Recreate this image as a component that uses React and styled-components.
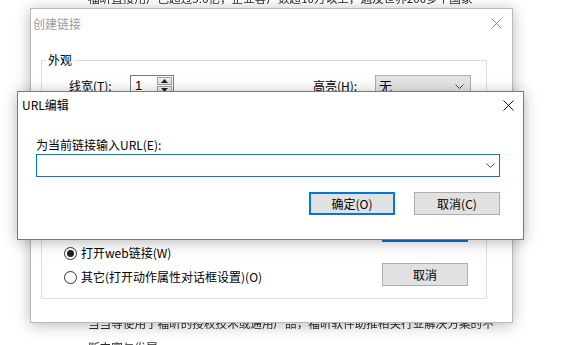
import React from "react";
import styled, { createGlobalStyle } from "styled-components";

const Global = createGlobalStyle`
  html, body { margin: 0; padding: 0; background: #fff; }
  body { font-family: "Noto Sans CJK SC", "Noto Sans", sans-serif; font-size: 12px; color: #000; }
  * { box-sizing: border-box; }
`;

const Desktop = styled.div`
  position: relative;
  width: 572px;
  height: 345px;
  overflow: hidden;
  background: #fff;
`;

const Page = styled.div`
  display: flex;
  flex-direction: column;
  justify-content: space-between;
  height: 345px;
  padding-left: 88px;
  color: #2a2a2a;
  font-size: 11.6px;
  line-height: 24px;
  filter: blur(0.35px);
  white-space: nowrap;
`;

const Para = styled.p`
  margin: ${(p) => (p.$top ? "-14px 0 0" : "0 0 -14px")};
`;

const Window = styled.div`
  position: absolute;
  left: ${(p) => p.$x}px;
  top: ${(p) => p.$y}px;
  width: ${(p) => p.$w}px;
  height: ${(p) => p.$h}px;
  background: #fff;
  border: 1px solid ${(p) => p.$border};
  box-shadow: 0 2px 14px rgba(0, 0, 0, 0.28);
  display: flex;
  flex-direction: column;
`;

const TitleBar = styled.div`
  height: ${(p) => p.$h}px;
  display: flex;
  align-items: center;
  justify-content: space-between;
  padding: 0 ${(p) => p.$pr}px 0 ${(p) => p.$pl}px;
  color: ${(p) => p.$color};
  font-size: 12px;
  line-height: 16px;
  flex: none;
`;

const CloseIcon = ({ color }) => (
  <svg width="11" height="11" viewBox="0 0 11 11">
    <path d="M0.5 0.5 L10.5 10.5 M10.5 0.5 L0.5 10.5" stroke={color} strokeWidth="1" fill="none" />
  </svg>
);

const BackBody = styled.div`
  padding: 15px 25px 0 10px;
`;

const Group = styled.fieldset`
  margin: 0;
  border: 1px solid #dcdcdc;
  padding: 8px 0 9px 0;
  min-width: 0;
`;

const Legend = styled.legend`
  margin-left: 4px;
  padding: 0 2px;
  font-size: 12px;
  line-height: 14px;
  color: #000;
`;

const ControlRow = styled.div`
  display: flex;
  align-items: center;
  height: 21px;
  padding-left: 27px;
`;

const Label = styled.span`
  width: ${(p) => p.$w}px;
  font-size: 12px;
  line-height: 16px;
`;

const Spin = styled.div`
  display: flex;
  width: 44px;
  height: 21px;
  border: 1px solid #7a7a7a;
  background: #fff;
`;

const SpinText = styled.div`
  flex: 1;
  padding-left: 4px;
  font-family: "Liberation Sans", sans-serif;
  font-size: 13px;
  line-height: 19px;
`;

const SpinArrows = styled.div`
  width: 16px;
  display: flex;
  flex-direction: column;
  gap: 1px;
  padding: 1px 1px 1px 0;
`;

const SpinBtn = styled.div`
  flex: 1;
  background: linear-gradient(#f4f4f4, #dedede);
  border: 1px solid #a0a0a0;
  display: flex;
  align-items: center;
  justify-content: center;
`;

const Tri = ({ up }) => (
  <svg width="7" height="4" viewBox="0 0 7 4">
    <path d={up ? "M0 4 L3.5 0 L7 4 Z" : "M0 0 L3.5 4 L7 0 Z"} fill="#222" />
  </svg>
);

const Spacer = styled.div`
  width: ${(p) => p.$w}px;
  flex: none;
`;

const Select = styled.div`
  width: 96px;
  height: 22px;
  margin-top: 1px;
  border: 1px solid #adadad;
  background: #e5e5e5;
  display: flex;
  align-items: center;
  justify-content: space-between;
  padding: 0 6px 0 3px;
  font-size: 13px;
  line-height: 16px;
`;

const Chevron = () => (
  <svg width="9" height="5" viewBox="0 0 9 5">
    <path d="M0.5 0.5 L4.5 4.5 L8.5 0.5" stroke="#444" strokeWidth="1" fill="none" />
  </svg>
);

const Lower = styled.div`
  display: flex;
  justify-content: space-between;
  margin-top: 123px;
  padding: 0 18px 0 22px;
`;

const Radios = styled.div`
  display: flex;
  flex-direction: column;
  padding-top: 22px;
`;

const RadioRow = styled.label`
  display: flex;
  align-items: center;
  gap: 4px;
  height: 24px;
  font-size: 12px;
  line-height: 16px;
`;

const RadioDot = styled.span`
  width: 13px;
  height: 13px;
  border-radius: 50%;
  border: 1px solid #333;
  display: flex;
  align-items: center;
  justify-content: center;
  &::after {
    content: "";
    width: 7px;
    height: 7px;
    border-radius: 50%;
    background: ${(p) => (p.$on ? "#222" : "transparent")};
  }
`;

const ButtonCol = styled.div`
  display: flex;
  flex-direction: column;
  gap: 21px;
`;

const Button = styled.div`
  width: 86px;
  height: 23px;
  background: #e1e1e1;
  border: ${(p) => (p.$def ? "2px solid #0078d7" : "1px solid #adadad")};
  display: flex;
  align-items: center;
  justify-content: center;
  font-size: 12px;
  line-height: 16px;
  color: #000;
`;

const FrontBody = styled.div`
  display: flex;
  flex-direction: column;
  padding: 19px 23px 0 18px;
`;

const FieldLabel = styled.div`
  font-size: 12px;
  line-height: 16px;
`;

const Combo = styled.div`
  margin-top: 1px;
  height: 23px;
  border: 1px solid #0078d7;
  display: flex;
  align-items: center;
  justify-content: flex-end;
  padding-right: 4px;
`;

const ButtonRow = styled.div`
  margin-top: 15px;
  display: flex;
  justify-content: flex-end;
  gap: 19px;
`;

export default function App() {
  return (
    <>
      <Global />
      <Desktop>
        <Page>
          <Para $top>福昕直接用户已超过5.6亿，企业客户数超10万以上，遍及世界200多个国家</Para>
          <Para>
            当当等使用了福昕的授权技术或通用产品，福昕软件助推相关行业解决方案的不
            <br />
            断丰富与发展
          </Para>
        </Page>

        <Window $x={30} $y={8} $w={483} $h={315} $border="#b9b9b9">
          <TitleBar $h={29} $pl={2} $pr={10} $color="#9a9a9a">
            <span>创建链接</span>
            <CloseIcon color="#8a8a8a" />
          </TitleBar>
          <BackBody>
            <Group>
              <Legend>外观</Legend>
              <ControlRow>
                <Label $w={61}>线宽(T):</Label>
                <Spin>
                  <SpinText>1</SpinText>
                  <SpinArrows>
                    <SpinBtn><Tri up /></SpinBtn>
                    <SpinBtn><Tri /></SpinBtn>
                  </SpinArrows>
                </Spin>
                <Spacer $w={139} />
                <Label $w={62}>高亮(H):</Label>
                <Select>
                  <span>无</span>
                  <Chevron />
                </Select>
              </ControlRow>
              <Lower>
                <Radios>
                  <RadioRow><RadioDot $on />打开web链接(W)</RadioRow>
                  <RadioRow><RadioDot />其它(打开动作属性对话框设置)(O)</RadioRow>
                </Radios>
                <ButtonCol>
                  <Button $def>确定</Button>
                  <Button>取消</Button>
                </ButtonCol>
              </Lower>
            </Group>
          </BackBody>
        </Window>

        <Window $x={17} $y={91} $w={507} $h={149} $border="#7a7a7a">
          <TitleBar $h={26} $pl={4} $pr={9} $color="#000">
            <span>URL编辑</span>
            <CloseIcon color="#111" />
          </TitleBar>
          <FrontBody>
            <FieldLabel>为当前链接输入URL(E):</FieldLabel>
            <Combo>
              <Chevron />
            </Combo>
            <ButtonRow>
              <Button $def>确定(O)</Button>
              <Button>取消(C)</Button>
            </ButtonRow>
          </FrontBody>
        </Window>
      </Desktop>
    </>
  );
}
